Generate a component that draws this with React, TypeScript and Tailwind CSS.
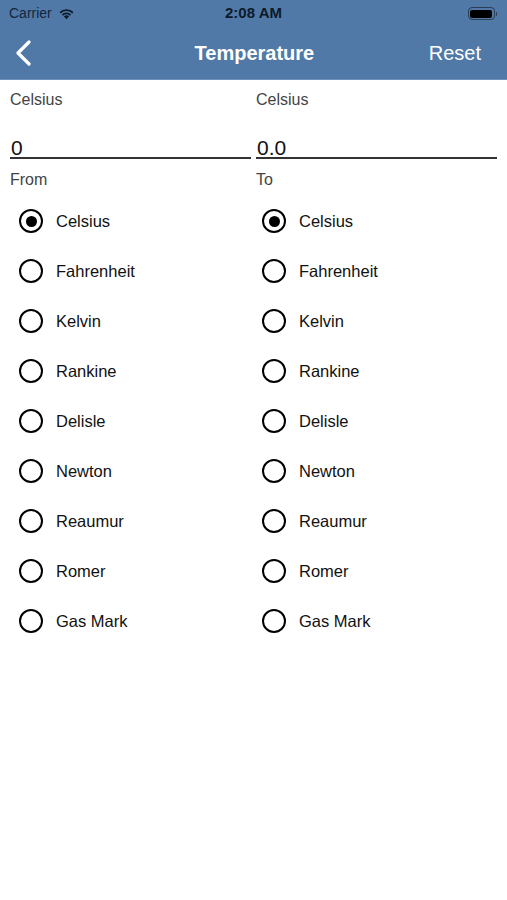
import { useState } from "react";

const units = [
  "Celsius",
  "Fahrenheit",
  "Kelvin",
  "Rankine",
  "Delisle",
  "Newton",
  "Reaumur",
  "Romer",
  "Gas Mark",
];

function Radio({ checked }: { checked: boolean }) {
  return (
    <div className="flex h-[24px] w-[24px] items-center justify-center rounded-full border-2 border-black">
      {checked && <div className="h-[11px] w-[11px] rounded-full bg-black" />}
    </div>
  );
}

function UnitColumn({
  label,
  value,
  caption,
  selected,
  onSelect,
  radioPad,
}: {
  label: string;
  value: string;
  caption: string;
  selected: string;
  onSelect: (u: string) => void;
  radioPad: string;
}) {
  return (
    <div className="flex w-[241px] flex-col">
      <div className="h-[19px] text-[16px] leading-[19px] text-[#444]">{label}</div>
      <div className="mt-[29px] h-[21px] border-b-2 border-[#333] pl-[1px] text-[21px] leading-[19px] text-[#111]">
        {value}
      </div>
      <div className="mt-[11px] h-[19px] text-[16px] leading-[19px] text-[#444]">{caption}</div>
      <div className={`mt-[7px] flex flex-col ${radioPad}`}>
        {units.map((u) => (
          <div
            key={u}
            className="flex h-[50px] cursor-pointer items-center"
            onClick={() => onSelect(u)}
          >
            <Radio checked={selected === u} />
            <span className="ml-[13px] text-[16.5px] text-[#111]">{u}</span>
          </div>
        ))}
      </div>
    </div>
  );
}

export default function App() {
  const [from, setFrom] = useState("Celsius");
  const [to, setTo] = useState("Celsius");

  return (
    <div
      className="h-[900px] w-[507px] bg-white"
      style={{ fontFamily: '"Liberation Sans", Arial, sans-serif' }}
    >
      <div className="border-b border-[#6d91ba] bg-[#5079a8]">
        <div className="flex h-[27px] items-center justify-between px-[9px]">
          <div className="flex w-[120px] items-center gap-[6px] text-[14px] text-[#14263a]">
            <span>Carrier</span>
            <svg width="17" height="13" viewBox="0 0 16 12">
              <path d="M8 11.5 L5.6 8.9 A3.4 3.4 0 0 1 10.4 8.9 Z" fill="#0d1a28" />
              <path d="M3.6 6.9 A6.2 6.2 0 0 1 12.4 6.9 L11.2 8.1 A4.5 4.5 0 0 0 4.8 8.1 Z" fill="#0d1a28" />
              <path d="M1.4 4.7 A9.3 9.3 0 0 1 14.6 4.7 L13.4 5.9 A7.6 7.6 0 0 0 2.6 5.9 Z" fill="#0d1a28" />
            </svg>
          </div>
          <div className="text-[15px] font-bold text-[#0d1a28]">2:08 AM</div>
          <div className="flex w-[120px] justify-end pr-[1px]">
            <div className="flex items-center">
              <div className="flex h-[13px] w-[27px] items-center rounded-[4px] border border-[#2c3e55] p-[1.5px]">
                <div className="h-full w-full rounded-[2px] bg-black" />
              </div>
              <div className="ml-[1px] h-[4px] w-[1.5px] rounded-r bg-[#2c3e55]" />
            </div>
          </div>
        </div>
        <div className="flex h-[52px] items-center justify-between pl-[14px] pr-[26px]">
          <svg width="20" height="26" viewBox="0 0 20 26">
            <path
              d="M15 2 L4 13 L15 24"
              fill="none"
              stroke="white"
              strokeWidth="3.2"
              strokeLinecap="round"
              strokeLinejoin="round"
            />
          </svg>
          <div className="pl-[46px] text-[20px] font-bold text-white">Temperature</div>
          <div className="text-[20px] text-white">Reset</div>
        </div>
      </div>
      <div className="flex gap-[5px] px-[10px] pt-[10px]">
        <UnitColumn
          label="Celsius"
          value="0"
          caption="From"
          selected={from}
          onSelect={setFrom}
          radioPad="pl-[9px]"
        />
        <UnitColumn
          label="Celsius"
          value="0.0"
          caption="To"
          selected={to}
          onSelect={setTo}
          radioPad="pl-[6px]"
        />
      </div>
    </div>
  );
}
